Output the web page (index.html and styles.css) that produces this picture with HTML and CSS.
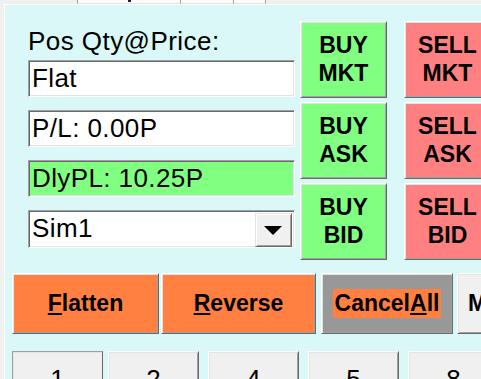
FILE: index.html
```html
<!DOCTYPE html>
<html>
<head>
<meta charset="utf-8">
<link rel="stylesheet" href="styles.css">
</head>
<body>
<div class="topbar">
  <div class="tab t1"><span class="tabmark"></span></div>
  <div class="tab t2"></div>
  <div class="tab t3"></div>
</div>
<div class="panel">
  <div class="top">
    <div class="info">
      <div class="label">Pos Qty@Price:</div>
      <div class="field">Flat</div>
      <div class="field">P/L: 0.00P</div>
      <div class="field green">DlyPL: 10.25P</div>
      <div class="combo">
        <span class="combo-text">Sim1</span>
        <span class="combo-btn"><svg width="18" height="9" viewBox="0 0 18 9"><path d="M0 0H18L9 9Z" fill="#000"/></svg></span>
      </div>
    </div>
    <div class="col col-buy">
      <div class="btn buy">BUY<br>MKT</div>
      <div class="btn buy">BUY<br>ASK</div>
      <div class="btn buy">BUY<br>BID</div>
    </div>
    <div class="col col-sell">
      <div class="btn sell">SELL<br>MKT</div>
      <div class="btn sell">SELL<br>ASK</div>
      <div class="btn sell">SELL<br>BID</div>
    </div>
  </div>
  <div class="actions">
    <div class="act orange flatten"><u>F</u>latten</div>
    <div class="act orange reverse"><u>R</u>everse</div>
    <div class="act grey cancel"><span class="hl">Cancel<u>A</u>ll</span></div>
    <div class="act plain more">Modify</div>
  </div>
  <div class="nums">
    <div class="num n1 pressed">1</div>
    <div class="num n2">2</div>
    <div class="num n3">4</div>
    <div class="num n4">5</div>
    <div class="num n5">8</div>
  </div>
</div>
</body>
</html>
```

FILE: styles.css
```css
html, body {
  margin: 0;
  padding: 0;
}
body {
  width: 481px;
  height: 379px;
  overflow: hidden;
  background: #f0f0f0;
  font-family: "Liberation Sans", Arial, sans-serif;
  color: #000;
}
.topbar {
  height: 4px;
  display: flex;
  padding-left: 77px;
}
.tab {
  height: 3px;
  background: #fbfbfb;
  border-left: 1px solid #a0a0a0;
  border-bottom: 1px solid #e3e3e3;
  position: relative;
}
.t1 { width: 102px; }
.t2 { width: 52px; }
.t3 { width: 31px; border-right: 1px solid #a0a0a0; }
.tabmark {
  position: absolute;
  left: 50px;
  top: 0;
  width: 3px;
  height: 2px;
  background: #1a1a40;
}
.panel {
  margin-left: 4px;
  border-left: 1px solid #ffffff;
  border-top: 1px solid #ffffff;
  background: #daf8f8;
  height: 400px;
  overflow: hidden;
}
.top {
  display: flex;
  padding-top: 16px;
  padding-left: 23px;
}
.info {
  width: 267px;
  flex-shrink: 0;
  padding-top: 5px;
  display: flex;
  flex-direction: column;
}
.label {
  font-size: 26px;
  line-height: 30px;
  height: 30px;
  margin-bottom: 4px;
  white-space: nowrap;
  letter-spacing: 0.45px;
}
.field, .combo {
  box-sizing: border-box;
  height: 37px;
  background: #ffffff;
  border: 1px solid;
  border-color: #a0a0a0 #ffffff #ffffff #a0a0a0;
  box-shadow: inset 1px 1px 0 #696969, inset -1px -1px 0 #e3e3e3;
  font-size: 26px;
  line-height: 31px;
  letter-spacing: 0.4px;
  padding: 2px 0 0 3px;
  margin-bottom: 13px;
  white-space: nowrap;
}
.green {
  background: #80ff80;
}
.combo {
  height: 38px;
  display: flex;
  padding: 2px 2px 2px 3px;
}
.combo-text {
  flex: 1;
}
.combo-btn {
  box-sizing: border-box;
  width: 37px;
  height: 34px;
  background: #f0f0f0;
  border: 1px solid;
  border-color: #e3e3e3 #696969 #696969 #e3e3e3;
  box-shadow: inset 1px 1px 0 #ffffff, inset -1px -1px 0 #a0a0a0;
  display: flex;
  align-items: center;
  justify-content: center;
  padding-right: 2px;
}
.combo-btn svg { display: block; }
.col {
  width: 87px;
  flex-shrink: 0;
  display: flex;
  flex-direction: column;
  gap: 4px;
}
.col-buy { margin-left: 5px; }
.col-sell { margin-left: 17px; }
.btn, .act, .num {
  box-sizing: border-box;
  border: 1px solid;
  border-color: #ffffff #696969 #696969 #ffffff;
  box-shadow: inset 1px 1px 0 #e3e3e3, inset -1px -1px 0 #a0a0a0;
  display: flex;
  align-items: center;
  justify-content: center;
  text-align: center;
  flex-shrink: 0;
  white-space: nowrap;
}
.btn {
  height: 77px;
  font-weight: bold;
  font-size: 23px;
  line-height: 28px;
  padding-bottom: 1px;
}
.buy { background: #80ff80; }
.sell { background: #ff8080; }
.actions {
  display: flex;
  margin-top: 12px;
  padding-left: 7px;
}
.act {
  height: 61px;
  font-weight: bold;
  font-size: 23px;
  line-height: 29px;
}
.act u {
  text-decoration-thickness: 2px;
  text-underline-offset: 2px;
}
.orange { background: #ff8040; }
.grey { background: #989898; }
.plain { background: #f0f0f0; justify-content: flex-start; padding-left: 10px; }
.flatten { width: 147px; margin-right: 2px; }
.reverse { width: 155px; margin-right: 5px; }
.cancel { width: 132px; margin-right: 4px; }
.more { width: 100px; }
.hl {
  background: #ff8040;
  padding: 0 2px;
}
.nums {
  display: flex;
  margin-top: 17px;
  padding-left: 7px;
}
.num {
  width: 91px;
  height: 56px;
  background: #f0f0f0;
  font-size: 26px;
  line-height: 30px;
  margin-left: 9px;
}
.n1 { margin-left: 0; }
.n2 { margin-left: 5px; }
.pressed {
  border-color: #a0a0a0 #696969 #696969 #a0a0a0;
  box-shadow: inset 1px 1px 0 #e3e3e3;
}
```
